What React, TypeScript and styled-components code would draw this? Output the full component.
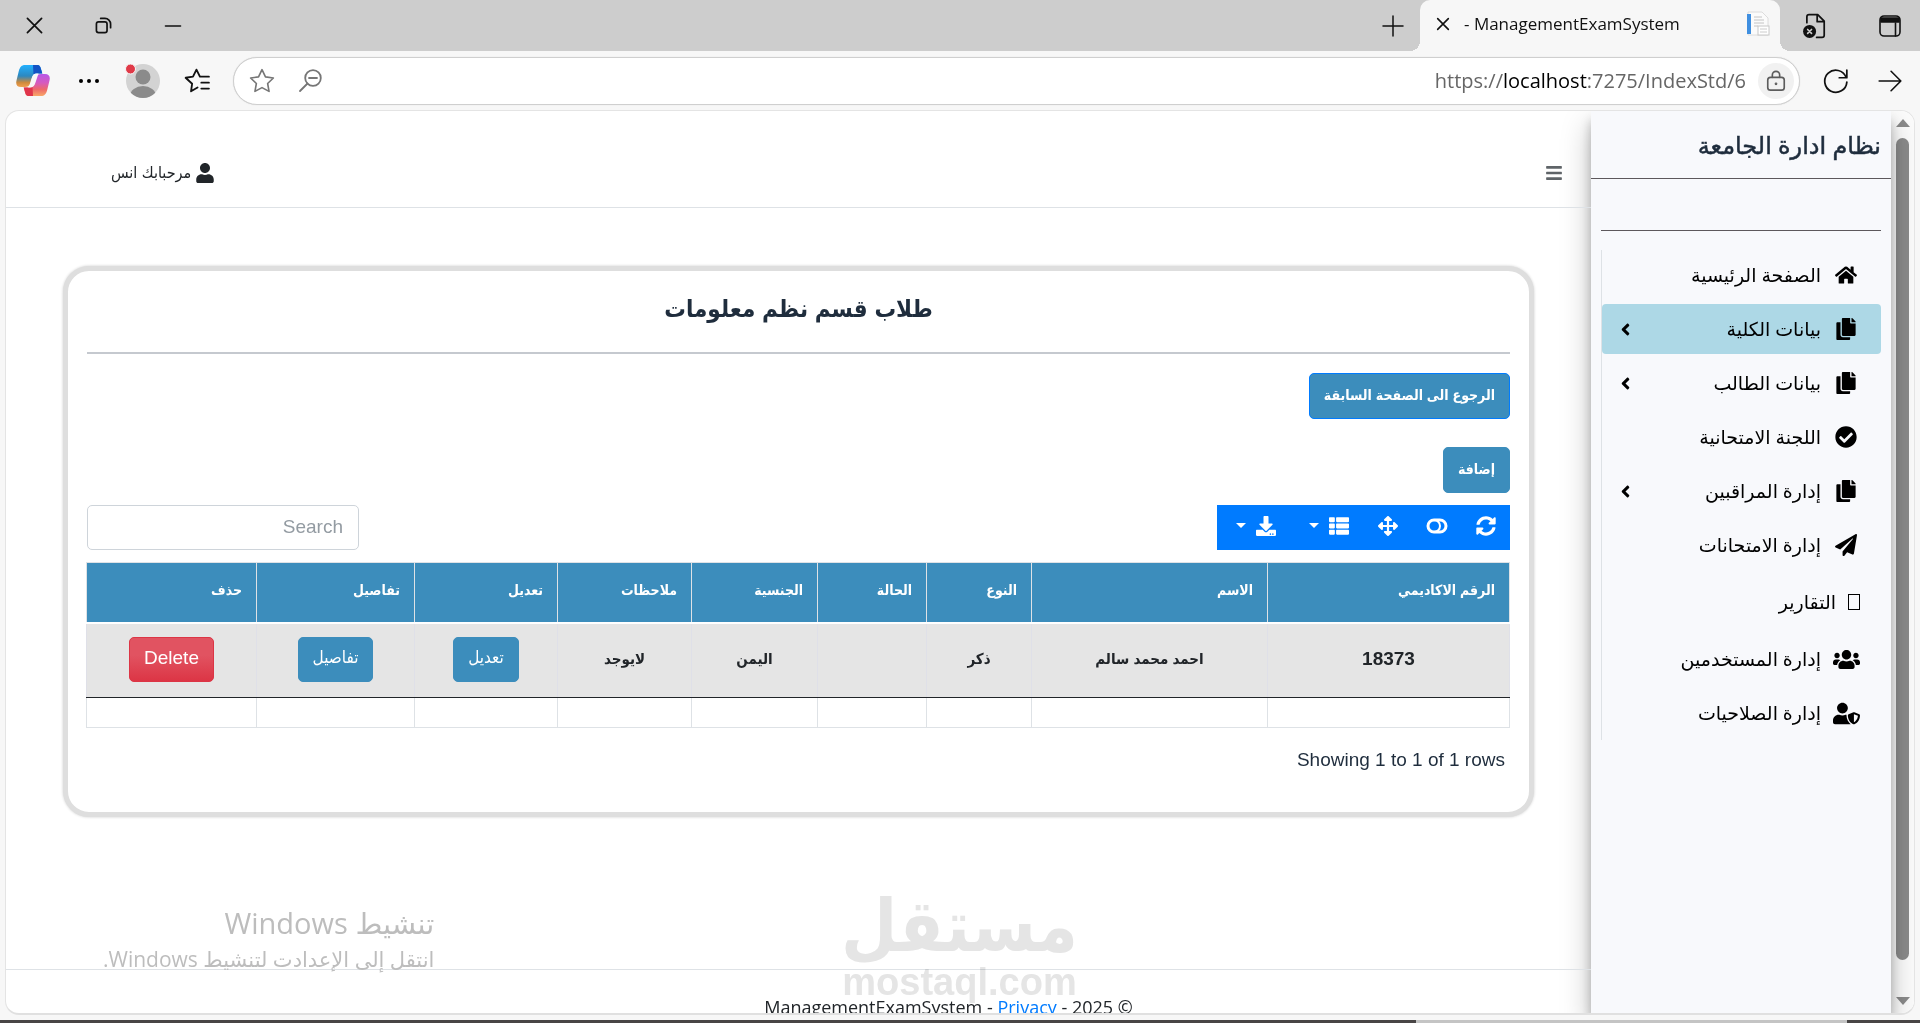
import React, { useState } from 'react';
import styled, { createGlobalStyle, css } from 'styled-components';
import {
  FaHome, FaCopy, FaCheckCircle, FaPaperPlane, FaUsers, FaUserShield, FaUser,
  FaBars, FaSyncAlt, FaArrowsAlt, FaThList, FaDownload, FaAngleLeft,
} from 'react-icons/fa';

const uiFont = '"Open Sans", "Noto Sans", "DejaVu Sans", sans-serif';
const siteFont = '"Liberation Sans", "DejaVu Sans Condensed", "DejaVu Sans", sans-serif';

const GlobalStyle = createGlobalStyle`
  *, *::before, *::after { box-sizing: border-box; }
  body { margin: 0; background: #f7f7f7; font-family: ${siteFont}; color: #212529; }
  button, input { font: inherit; }
`;

const Window = styled.div`
  height: 100vh;
  display: flex;
  flex-direction: column;
  overflow: hidden;
`;

/* ---------- browser chrome ---------- */

const PlainButton = styled.button`
  display: flex;
  align-items: center;
  justify-content: center;
  flex: none;
  padding: 0;
  border: 0;
  background: transparent;
  color: #111;
  cursor: pointer;
`;

const TitleBar = styled.header`
  flex: none;
  height: 51px;
  display: flex;
  align-items: stretch;
  background: #cdcdcd;
`;

const TitleActions = styled.div`
  display: flex;
  gap: 10px;
`;

const TitleButton = styled(PlainButton)<{ $w: number }>`
  width: ${(p) => p.$w}px;
`;

const Tab = styled.div`
  position: relative;
  width: 360px;
  display: flex;
  align-items: center;
  gap: 13px;
  padding: 0 10px 3px 15px;
  border-radius: 10px 10px 0 0;
  background: #f7f7f7;
  font: 17px/24px ${uiFont};
  color: #111;

  &::before, &::after {
    content: '';
    position: absolute;
    bottom: 0;
    width: 10px;
    height: 10px;
  }
  &::before { right: -10px; background: radial-gradient(circle at 100% 0, #cdcdcd 10px, #f7f7f7 10px); }
  &::after { left: -10px; background: radial-gradient(circle at 0 0, #cdcdcd 10px, #f7f7f7 10px); }
`;

const TabTitle = styled.span`
  flex: 1;
  text-align: left;
  white-space: nowrap;
`;

const Spacer = styled.div`
  flex: 1;
`;

const AddressRow = styled.div`
  flex: none;
  height: 59px;
  display: flex;
  align-items: center;
  padding: 0 3px 0 4px;
`;

const ToolButton = styled(PlainButton)<{ $w?: number }>`
  width: ${(p) => p.$w ?? 54}px;
  height: 44px;
`;

const AddressBar = styled.div`
  flex: 1;
  height: 48px;
  display: flex;
  align-items: center;
  gap: 12px;
  margin: 0 9px;
  padding: 0 5px;
  border: 1px solid #cfcfcf;
  border-radius: 24px;
  background: #fff;
  box-shadow: 0 0 1px #cfcfcf;
`;

const LockBadge = styled(PlainButton)`
  width: 36px;
  height: 36px;
  border-radius: 50%;
  background: #f1f1f1;
  color: #5c5c5c;
`;

const Url = styled.div`
  direction: ltr;
  font: 20px/28px ${uiFont};
  color: #666;
  white-space: nowrap;
  b { font-weight: 400; color: #000; }
`;

const AddressActions = styled.div`
  display: flex;
  margin-inline-start: auto;
`;

/* ---------- page frame ---------- */

const Viewport = styled.div`
  flex: 1;
  min-height: 0;
  display: flex;
  margin: 0 5px 5px;
  border: 1px solid #e4e4e4;
  border-bottom: 2px solid #e0e0e0;
  border-radius: 14px;
  background: #fff;
  overflow: hidden;
`;

const ScrollTrack = styled.div`
  flex: none;
  width: 23px;
  display: flex;
  flex-direction: column;
  align-items: center;
  justify-content: space-between;
  padding: 8px 0;
  background: #fcfcfc;
`;

const ScrollThumb = styled.div`
  flex: 1;
  width: 13px;
  margin: 11px 0 37px;
  border-radius: 7px;
  background: #8b8b8b;
`;

const ScrollArrow = styled.div<{ $down?: boolean }>`
  border: 7px solid transparent;
  ${(p) => (p.$down
    ? css`border-top: 8px solid #8b8b8b; border-bottom: 0;`
    : css`border-bottom: 8px solid #8b8b8b; border-top: 0;`)}
`;

const TaskbarEdge = styled.div`
  flex: none;
  height: 3px;
  background: linear-gradient(to right, #484545 0 1416px, #c4c4c4 1416px 1847px, #484545 1847px);
`;

/* ---------- sidebar ---------- */

const Sidebar = styled.aside`
  position: relative;
  flex: none;
  width: 300px;
  background: #f8f9fc;
  box-shadow: 0 14px 28px rgba(0, 0, 0, 0.25), 0 10px 10px rgba(0, 0, 0, 0.22);
  font-family: ${uiFont};
`;

const Brand = styled.a`
  display: block;
  height: 68px;
  padding: 17px 10px 0;
  border-bottom: 1px solid #5d585c;
  font-size: 24px;
  line-height: 34px;
  font-weight: 500;
  color: #1f2d3d;
  -webkit-text-stroke: thin #1f2d3d;
  text-decoration: none;
  white-space: nowrap;
`;

const UserPanel = styled.div`
  height: 52px;
  margin: 0 10px 19px;
  border-bottom: 1px solid #5d585c;
`;

const Menu = styled.ul`
  display: flex;
  flex-direction: column;
  gap: 4px;
  margin: 0 10px;
  padding: 0 0 2px;
  border-left: 1px solid #dee2e6;
  list-style: none;
`;

const MenuLink = styled.a<{ $active?: boolean; $compact?: boolean }>`
  display: flex;
  align-items: center;
  gap: ${(p) => (p.$compact ? 12 : 8)}px;
  height: ${(p) => (p.$compact ? 56 : 50)}px;
  padding: 0 ${(p) => (p.$compact ? 21 : 18)}px 0 14px;
  border-radius: 4px;
  background: ${(p) => (p.$active ? '#add8e6' : 'transparent')};
  color: #000;
  font-size: 19px;
  line-height: 28px;
  text-decoration: none;
  white-space: nowrap;

  > svg:last-child { margin-inline-start: auto; }
`;

const MenuIcon = styled.span<{ $wide?: boolean }>`
  display: flex;
  justify-content: center;
  width: 34px;
  font-size: ${(p) => (p.$wide ? 27 : 22)}px;
`;

const EmptyGlyph = styled.span`
  width: 12px;
  height: 16px;
  border: 1px solid #000;
`;

/* ---------- main area ---------- */

const Main = styled.main`
  position: relative;
  flex: 1;
  min-width: 0;
  display: flex;
  flex-direction: column;
`;

const TopBar = styled.nav`
  flex: none;
  height: 97px;
  display: flex;
  align-items: center;
  justify-content: space-between;
  padding: 28px 28px 0 105px;
  border-bottom: 1px solid #dee2e6;
`;

const UserLink = styled.a`
  display: flex;
  align-items: center;
  gap: 4px;
  color: #212529;
  font-size: 16px;
  line-height: 24px;
  text-decoration: none;
`;

const Card = styled.section`
  margin: 58px 57px 0;
  padding: 18px 19px 39px;
  border: 5px solid #dedede;
  border-radius: 26px;
  background: #fff;
  box-shadow: 0 0 3px rgba(0, 0, 0, 0.2);
`;

const CardTitle = styled.h1`
  margin: 0;
  padding-bottom: 23px;
  border-bottom: 2px solid #c5c9cf;
  font: 900 24px/40px ${siteFont};
  color: #1f2d3d;
  text-align: center;
`;

const Actions = styled.div`
  display: flex;
  flex-direction: column;
  align-items: flex-start;
  gap: 28px;
  margin: 19px 0 12px;
`;

const buttonVariants = {
  plain: css`
    height: 45px;
    font-size: 17px;
    font-weight: 400;
  `,
  strong: css`
    font-size: 14px;
    font-weight: 700;
  `,
  outlined: css`
    border-color: #007bff;
    font-size: 14px;
    font-weight: 700;
  `,
  danger: css`
    height: 45px;
    border-color: #dc3545;
    background: linear-gradient(#e15361 40%, #dc3545);
    font-size: 19px;
    font-weight: 400;
  `,
};

const Button = styled.button<{ $variant?: keyof typeof buttonVariants }>`
  height: 46px;
  padding: 0 14px 2px;
  border: 1px solid #3c8dbc;
  border-radius: 5px;
  background: #3c8dbc;
  color: #fff;
  line-height: 24px;
  white-space: nowrap;
  cursor: pointer;
  ${(p) => buttonVariants[p.$variant ?? 'plain']}
`;

const TableTools = styled.div`
  display: flex;
  justify-content: space-between;
  margin-bottom: 12px;
`;

const ToolGroup = styled.div`
  display: flex;
  height: 45px;
  background: #007bff;
`;

const GroupButton = styled.button<{ $caret?: boolean }>`
  display: flex;
  align-items: center;
  justify-content: center;
  gap: 10px;
  width: ${(p) => (p.$caret ? 73 : 49)}px;
  padding: 0 0 4px ${(p) => (p.$caret ? 4 : 0)}px;
  border: 0;
  background: transparent;
  color: #fff;
  font-size: 20px;
  cursor: pointer;
`;

const Caret = styled.span`
  border: 5px solid transparent;
  border-top-color: #fff;
  border-bottom: 0;
`;

const Search = styled.input`
  width: 272px;
  height: 45px;
  padding: 0 15px 2px;
  border: 1px solid #ced4da;
  border-radius: 5px;
  background: #fff;
  font-size: 19px;
  &::placeholder { color: #939ba2; opacity: 1; }
`;

const Table = styled.table`
  width: 100%;
  table-layout: fixed;
  border-collapse: collapse;

  th, td { border: 1px solid #dee2e6; }

  th {
    height: 60px;
    padding: 0 14px 4px;
    border-bottom: 2px solid #fff;
    background: #3c8dbc;
    color: #fff;
    font-size: 14px;
    text-align: start;
    white-space: nowrap;
  }

  td { height: 30px; padding: 0; }

  tr[data-record] td {
    height: 75px;
    padding-bottom: 2px;
    border-color: #dfe0e8;
    border-bottom: 1px solid #212529;
    background: #e5e5e5;
    color: #212529;
    font-size: 15px;
    font-weight: 700;
    text-align: center;
  }

  tr[data-record] td:first-child { font-size: 19px; }
  tr[data-record] + tr td { border-top-color: #212529; }
`;

const Summary = styled.p`
  margin: 19px 5px 0;
  direction: ltr;
  text-align: right;
  font-size: 19px;
  line-height: 26px;
  color: #1f2d3d;
`;

const Footer = styled.footer`
  flex: none;
  height: 44px;
  margin-top: auto;
  padding: 23px 0 0 300px;
  border-top: 1px solid #dee2e6;
  overflow: hidden;
  color: #212529;
  text-align: center;
  font: 18px/28px ${uiFont};
  a { color: #007bff; text-decoration: none; }
`;

const ActivateNotice = styled.div`
  position: absolute;
  left: 97px;
  bottom: 38px;
  color: #bdbdbd;
  font-family: ${uiFont};
  white-space: nowrap;
  p { margin: 0; font-size: 21px; line-height: 32px; }
  p:first-child { font-size: 29px; line-height: 40px; }
`;

const Watermark = styled.div`
  position: absolute;
  left: 50%;
  bottom: 11px;
  width: 232px;
  margin-left: 45px;
  display: flex;
  flex-direction: column;
  align-items: center;
  color: #e5e5e5;
  mix-blend-mode: multiply;
  font: 700 72px/72px "DejaVu Sans Condensed", "DejaVu Sans", sans-serif;
  white-space: nowrap;
  small { font: 700 38px/40px ${siteFont}; }
`;

const menuItems = [
  { label: 'الصفحة الرئيسية', icon: <FaHome /> },
  { label: 'بيانات الكلية', icon: <FaCopy />, nested: true, active: true },
  { label: 'بيانات الطالب', icon: <FaCopy />, nested: true },
  { label: 'اللجنة الامتحانية', icon: <FaCheckCircle /> },
  { label: 'إدارة المراقبين', icon: <FaCopy />, nested: true },
  { label: 'إدارة الامتحانات', icon: <FaPaperPlane /> },
  { label: 'التقارير', icon: null },
  { label: 'إدارة المستخدمين', icon: <FaUsers />, wide: true },
  { label: 'إدارة الصلاحيات', icon: <FaUserShield />, wide: true },
];

const columns = [
  { label: 'الرقم الاكاديمي', width: 242 },
  { label: 'الاسم', width: 236 },
  { label: 'النوع', width: 105 },
  { label: 'الحالة', width: 109 },
  { label: 'الجنسية', width: 126 },
  { label: 'ملاحظات', width: 134 },
  { label: 'تعديل', width: 143 },
  { label: 'تفاصيل', width: 158 },
  { label: 'حذف', width: 170 },
];

const Stroke = ({ size = 24, w = 2, children }: { size?: number; w?: number; children: React.ReactNode }) => (
  <svg width={size} height={size} viewBox="0 0 24 24" fill="none" stroke="currentColor"
    strokeWidth={w} strokeLinecap="round" strokeLinejoin="round" aria-hidden="true">
    {children}
  </svg>
);

const starPath = 'M12 1.5l3.2 6.7 7.3 1-5.3 5.1 1.3 7.3L12 18.1l-6.5 3.5 1.3-7.3L1.5 9.2l7.3-1z';

const CopilotLogo = () => (
  <svg width="34" height="31" viewBox="0 0 34 31" aria-hidden="true">
    <defs>
      <linearGradient id="cpA" x1="0" y1="0" x2="0" y2="1">
        <stop offset="0" stopColor="#22b0ff" /><stop offset=".5" stopColor="#2c88c0" />
        <stop offset=".8" stopColor="#cf8a3c" /><stop offset="1" stopColor="#f0a050" />
      </linearGradient>
      <linearGradient id="cpB" x1="0" y1="0" x2="0" y2="1">
        <stop offset="0" stopColor="#b658e8" /><stop offset=".4" stopColor="#d65abf" />
        <stop offset=".7" stopColor="#ee6a6a" /><stop offset="1" stopColor="#f8a868" />
      </linearGradient>
    </defs>
    <path d="M9 0h12c3 0 3.500 2 4.300 5l1 3.500H21c-3 0-4.500 1.500-5.500 5l-1.500 5c-.8 2.500-2 3.500-5 3.500H5c-4 0-5.500-2.500-4.500-6.500l2.300-9.500C4 2 5.500 0 9 0z" fill="url(#cpA)" />
    <path d="M17 0h4c3 0 3.500 2 4.300 5l1 3.500H21c-1.500 0-2.600.4-3.500 1.200z" fill="#1253c4" />
    <path d="M25 31H13c-3 0-3.500-2-4.300-5l-1-3.500H13c3 0 4.500-1.500 5.500-5l1.500-5c.8-2.500 2-3.500 5-3.500h4c4 0 5.500 2.500 4.500 6.500L31.200 25c-1.200 4-2.700 6-6.200 6z" fill="url(#cpB)" />
    <path d="M17 31h-4c-3 0-3.500-2-4.300-5l-1-3.500H13c1.500 0 2.600-.4 3.500-1.200z" fill="#e0354c" />
    <path d="M17.500 9.500c1-.8 2-1 3.500-1h1.500l-3 9c-1 3.500-2.500 5-5.500 5h-2.500c1.500-.6 2.300-1.800 2.800-3.500l1.500-5c.5-2 1-3.500 1.700-4.500z" fill="#f7f7f7" />
  </svg>
);

export default function App() {
  const [query, setQuery] = useState('');

  return (
    <Window dir="rtl" lang="ar">
      <GlobalStyle />
      <TitleBar>
        <TitleActions>
          <TitleButton $w={60} aria-label="الشريط الجانبي">
            <Stroke size={24} w={1.6}><rect x="2" y="2" width="20" height="20" rx="4" /><path d="M3 4h18v4H3z" fill="currentColor" /><path d="M17.500 9v13" /></Stroke>
          </TitleButton>
          <TitleButton $w={70} aria-label="مستندات">
            <Stroke size={26} w={1.6}>
              <path d="M4.500 9V3.500a2 2 0 012-2h8l6 6v13a2 2 0 01-2 2h-5M14 2v6h6" />
              <circle cx="7" cy="17" r="6" fill="currentColor" stroke="none" />
              <path d="M5.200 15.200l3.600 3.600M8.800 15.200l-3.600 3.600" stroke="#cdcdcd" strokeWidth="1.500" />
            </Stroke>
          </TitleButton>
        </TitleActions>
        <Tab>
          <svg width="24" height="26" viewBox="0 0 24 26" aria-hidden="true">
            <path d="M2 1h14l6 6v17H2z" fill="#fbfbfb" stroke="#dcdcdc" />
            <rect x="1" y="3" width="4" height="20" fill="#3f8fe0" />
            <path d="M8 6h8M8 9h10M8 12h10M8 15h4" stroke="#c4c4c4" />
            <rect x="12" y="15" width="11" height="9" fill="#fff" stroke="#c8c8c8" />
            <path d="M14 18h7M14 21h7" stroke="#ccc" />
          </svg>
          <TabTitle dir="ltr">- ManagementExamSystem</TabTitle>
          <PlainButton aria-label="إغلاق علامة التبويب"><Stroke size={16} w={2.4}><path d="M4 4l16 16M20 4L4 20" /></Stroke></PlainButton>
        </Tab>
        <TitleButton $w={54} aria-label="علامة تبويب جديدة"><Stroke size={24} w={1.5}><path d="M12 2v20M2 12h20" /></Stroke></TitleButton>
        <Spacer />
        <TitleButton $w={69} aria-label="تصغير"><Stroke size={20} w={2}><path d="M3 12h18" /></Stroke></TitleButton>
        <TitleButton $w={69} aria-label="استعادة"><Stroke size={17} w={2.4}><rect x="2" y="7" width="15" height="15" rx="3" /><path d="M8 2h6a8 8 0 018 8v5" /></Stroke></TitleButton>
        <TitleButton $w={69} aria-label="إغلاق"><Stroke size={17} w={2.4}><path d="M2 2l20 20M22 2L2 22" /></Stroke></TitleButton>
      </TitleBar>

      <AddressRow>
        <ToolButton aria-label="رجوع"><Stroke size={26} w={1.5}><path d="M2 12h20M13 3l9 9-9 9" /></Stroke></ToolButton>
        <ToolButton aria-label="تحديث"><Stroke size={26} w={1.6}><path d="M21.300 8.500A10.200 10.200 0 1022 13M22 2v7h-7" /></Stroke></ToolButton>
        <AddressBar>
          <LockBadge aria-label="معلومات الموقع">
            <Stroke size={22} w={1.8}><rect x="3" y="8" width="18" height="14" rx="3" /><path d="M8 8V5.500a4 4 0 018 0V8" /><circle cx="12" cy="15" r=".6" fill="currentColor" /></Stroke>
          </LockBadge>
          <Url>https://<b>localhost</b>:7275/IndexStd/6</Url>
          <AddressActions>
            <ToolButton $w={50} aria-label="تصغير العرض">
              <svg width="24" height="24" viewBox="0 0 24 24" fill="none" stroke="#767676" strokeWidth="1.800" strokeLinecap="round"><circle cx="15" cy="9" r="7.800" /><path d="M9.500 14.500L2 22M11 9h8" /></svg>
            </ToolButton>
            <ToolButton $w={46} aria-label="إضافة إلى المفضلة">
              <svg width="26" height="26" viewBox="0 0 24 24" fill="none" stroke="#767676" strokeWidth="1.500" strokeLinejoin="round"><path d={starPath} /></svg>
            </ToolButton>
          </AddressActions>
        </AddressBar>
        <ToolButton aria-label="المفضلة">
          <Stroke size={26} w={1.7}><path d="M12.500 18l-6 3.500 1-7L1.500 9l6.800-1L11.500 1.500l3.200 6.500h8.300M16 13.500h7M16 19h7" /></Stroke>
        </ToolButton>
        <ToolButton aria-label="الملف الشخصي">
          <svg width="36" height="36" viewBox="0 0 36 36" aria-hidden="true">
            <clipPath id="av"><circle cx="18" cy="18" r="17" /></clipPath>
            <circle cx="18" cy="18" r="17" fill="#d3d3d3" />
            <g clipPath="url(#av)" fill="#8b8b8b"><circle cx="18" cy="14" r="7.500" /><ellipse cx="18" cy="33" rx="13" ry="10" /></g>
            <circle cx="5.500" cy="6" r="5" fill="#e03a48" stroke="#f7f7f7" />
          </svg>
        </ToolButton>
        <ToolButton aria-label="المزيد"><svg width="22" height="6" viewBox="0 0 22 6"><circle cx="3" cy="3" r="2" /><circle cx="11" cy="3" r="2" /><circle cx="19" cy="3" r="2" /></svg></ToolButton>
        <ToolButton $w={58} aria-label="Copilot"><CopilotLogo /></ToolButton>
      </AddressRow>

      <Viewport>
        <ScrollTrack>
          <ScrollArrow />
          <ScrollThumb />
          <ScrollArrow $down />
        </ScrollTrack>
        <Sidebar>
          <Brand href="#">نظام ادارة الجامعة</Brand>
          <UserPanel />
          <Menu>
            {menuItems.map((item) => (
              <li key={item.label}>
                <MenuLink href="#" $active={item.active} $compact={!item.icon}>
                  {item.icon ? <MenuIcon $wide={item.wide}>{item.icon}</MenuIcon> : <EmptyGlyph />}
                  <span>{item.label}</span>
                  {item.nested && <FaAngleLeft />}
                </MenuLink>
              </li>
            ))}
          </Menu>
        </Sidebar>
        <Main>
          <TopBar>
            <PlainButton aria-label="القائمة"><FaBars size={18} color="#5f6468" /></PlainButton>
            <UserLink href="#"><FaUser size={20} /><span>مرحبابك انس</span></UserLink>
          </TopBar>
          <Card>
            <CardTitle>طلاب قسم نظم معلومات</CardTitle>
            <Actions>
              <Button $variant="outlined">الرجوع الى الصفحة السابقة</Button>
              <Button $variant="strong">إضافة</Button>
            </Actions>
            <TableTools>
              <ToolGroup>
                <GroupButton aria-label="تحديث الجدول"><FaSyncAlt /></GroupButton>
                <GroupButton aria-label="تبديل العرض">
                  <svg width="22" height="16" viewBox="0 0 22 16" fill="none" stroke="currentColor" strokeWidth="3"><rect x="2" y="2" width="18" height="12" rx="6" /><path d="M8 2a6 6 0 010 12" strokeWidth="2" /></svg>
                </GroupButton>
                <GroupButton aria-label="ملء الشاشة"><FaArrowsAlt /></GroupButton>
                <GroupButton $caret aria-label="الأعمدة"><FaThList /><Caret /></GroupButton>
                <GroupButton $caret aria-label="تصدير"><FaDownload /><Caret /></GroupButton>
              </ToolGroup>
              <Search type="search" aria-label="Search" placeholder="Search" value={query} onChange={(e) => setQuery(e.target.value)} />
            </TableTools>
            <Table>
              <colgroup>{columns.map((c) => <col key={c.label} style={{ width: c.width }} />)}</colgroup>
              <thead>
                <tr>{columns.map((c) => <th key={c.label} scope="col">{c.label}</th>)}</tr>
              </thead>
              <tbody>
                <tr data-record>
                  <td>18373</td>
                  <td>احمد محمد سالم</td>
                  <td>ذكر</td>
                  <td />
                  <td>اليمن</td>
                  <td>لايوجد</td>
                  <td><Button>تعديل</Button></td>
                  <td><Button>تفاصيل</Button></td>
                  <td><Button $variant="danger">Delete</Button></td>
                </tr>
                <tr>{columns.map((c) => <td key={c.label} />)}</tr>
              </tbody>
            </Table>
            <Summary>Showing 1 to 1 of 1 rows</Summary>
          </Card>
          <Footer>© 2025 - <bdi><a href="#">Privacy</a></bdi> - <bdi>ManagementExamSystem</bdi></Footer>
          <ActivateNotice>
            <p>تنشيط Windows</p>
            <p>انتقل إلى الإعدادت لتنشيط Windows.</p>
          </ActivateNotice>
          <Watermark><span>مستقل</span><small>mostaql.com</small></Watermark>
        </Main>
      </Viewport>
      <TaskbarEdge />
    </Window>
  );
}
